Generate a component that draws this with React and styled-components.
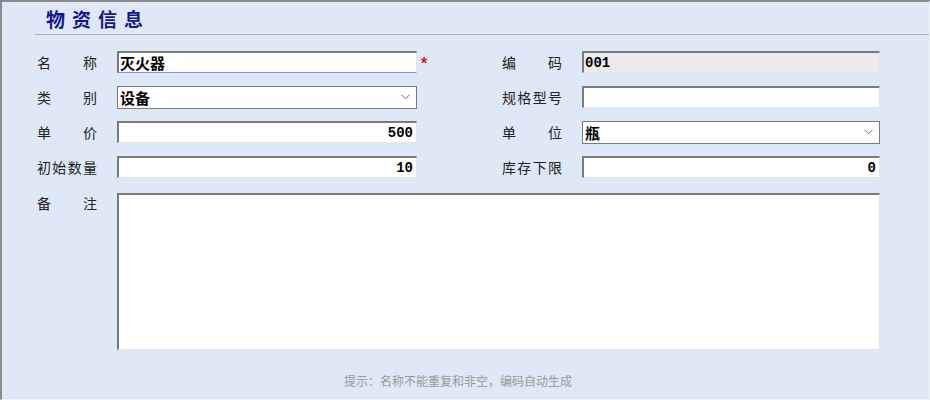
import React from 'react';
import styled, {createGlobalStyle} from 'styled-components';

const GlobalStyle = createGlobalStyle`
  body {
    margin: 0;
    font-family: "Noto Sans CJK SC", "Noto Sans", sans-serif;
  }
`;

const fields = [
  {left: {label: '名称', value: '灭火器', required: true}, right: {label: '编码', value: '001', disabled: true, mono: true}},
  {left: {label: '类别', value: '设备', select: true}, right: {label: '规格型号', value: ''}},
  {left: {label: '单价', value: '500', number: true}, right: {label: '单位', value: '瓶', select: true}},
  {left: {label: '初始数量', value: '10', number: true}, right: {label: '库存下限', value: '0', number: true}}
];

const Chevron = () => (
  <svg width="9" height="6" viewBox="0 0 9 6">
    <path d="M0.5 0.8 L4.5 4.8 L8.5 0.8" fill="none" stroke="#6a6a6a" strokeWidth="1"/>
  </svg>
);

const Label = ({text}) => (
  <LabelBox>
    {text.split('').map((ch, i) => <span key={i}>{ch}</span>)}
  </LabelBox>
);

const Control = ({field, focused}) => {
  if (field.select) {
    return (
      <Select>
        <SelectText>{field.value}</SelectText>
        <Chevron/>
      </Select>
    );
  }
  return (
    <Input
      defaultValue={field.value}
      readOnly
      $number={field.number}
      $mono={field.mono || field.number}
      $disabled={field.disabled}
      $focused={focused}
    />
  );
};

export default function App() {
  return (
    <Page>
      <GlobalStyle/>
      <Header>
        <Title>物资信息</Title>
      </Header>
      <Form>
        {fields.map((row, i) => (
          <React.Fragment key={i}>
            <Label text={row.left.label}/>
            <Control field={row.left} focused={i === 0}/>
            <Extra>{row.left.required && <Star>*</Star>}</Extra>
            <Label text={row.right.label}/>
            <Control field={row.right}/>
          </React.Fragment>
        ))}
        <LabelTop><Label text="备注"/></LabelTop>
        <Memo/>
      </Form>
      <Hint>提示：名称不能重复和非空，编码自动生成</Hint>
    </Page>
  );
}

const Page = styled.div`
  width: 930px;
  height: 400px;
  box-sizing: border-box;
  background: #dfe8f6;
  border-top: 2px solid #8a8a8a;
  border-left: 2px solid #8a8a8a;
  border-right: 1px solid #eef2f9;
  border-bottom: 1px solid #eef2f9;
  display: flex;
  flex-direction: column;
`;

const Header = styled.div`
  margin-left: 33px;
  height: 32px;
  border-bottom: 1px solid #a9b1bd;
  display: flex;
  align-items: center;
`;

const Title = styled.div`
  margin-left: 11px;
  font-size: 19px;
  font-weight: bold;
  letter-spacing: 7px;
  color: #15168a;
  line-height: 32px;
  padding-top: 2px;
`;

const Form = styled.div`
  display: grid;
  grid-template-columns: 80px 300px 85px 80px 298px;
  grid-auto-rows: 22px;
  row-gap: 13px;
  padding-left: 35px;
  margin-top: 16px;
  align-items: center;
`;

const LabelBox = styled.div`
  width: 60px;
  display: flex;
  justify-content: space-between;
  font-size: 14px;
  color: #222;
  line-height: 22px;
`;

const LabelTop = styled.div`
  align-self: start;
  grid-row: span 1;
  margin-top: 1px;
`;

const Input = styled.input`
  box-sizing: border-box;
  width: 100%;
  height: 22px;
  margin: 0;
  padding: 0 3px 0 1px;
  outline: none;
  background: ${p => (p.$disabled ? '#ebebeb' : '#fff')};
  border-top: 2px solid #7b7b7b;
  border-left: 2px solid #7b7b7b;
  border-right: 1px solid #e4e4e4;
  border-bottom: 1px solid ${p => (p.$focused ? '#8c8ee6' : '#e4e4e4')};
  text-align: ${p => (p.$number ? 'right' : 'left')};
  font-family: ${p => (p.$mono ? '"Liberation Mono", monospace' : '"Noto Sans CJK SC", sans-serif')};
  font-size: ${p => (p.$mono ? '14px' : '15px')};
  font-weight: bold;
  color: #000;
`;

const Select = styled.div`
  box-sizing: border-box;
  height: 23px;
  background: #fff;
  border: 1px solid #7a7a7a;
  display: flex;
  align-items: center;
  justify-content: space-between;
  padding: 0 6px 0 2px;
`;

const SelectText = styled.span`
  font-size: 15px;
  font-weight: bold;
  color: #000;
`;

const Extra = styled.div`
  padding-left: 4px;
  height: 22px;
  display: flex;
  align-items: center;
`;

const Star = styled.span`
  color: #e0102a;
  font-size: 16px;
  font-weight: bold;
  font-family: "Liberation Sans", sans-serif;
  line-height: 1;
  padding-top: 4px;
`;

const Memo = styled.textarea`
  grid-column: 2 / span 4;
  align-self: start;
  box-sizing: border-box;
  height: 157px;
  margin: 2px 0 0;
  resize: none;
  outline: none;
  background: #fff;
  border-top: 2px solid #7b7b7b;
  border-left: 2px solid #7b7b7b;
  border-right: 1px solid #e4e4e4;
  border-bottom: 1px solid #e4e4e4;
`;

const Hint = styled.div`
  margin-top: auto;
  margin-bottom: 10px;
  text-align: center;
  font-size: 12px;
  color: #999;
  padding-right: 15px;
`;
